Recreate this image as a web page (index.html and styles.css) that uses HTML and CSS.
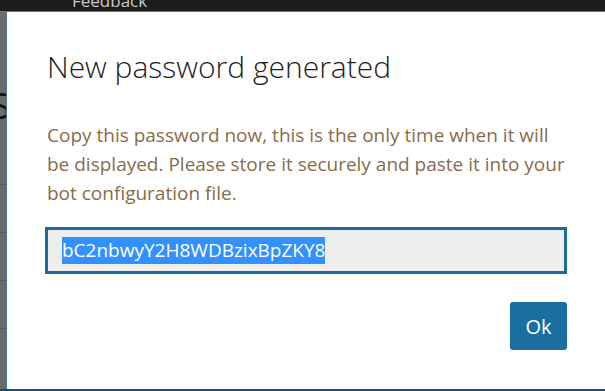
FILE: index.html
```html
<!DOCTYPE html>
<html>
<head>
<meta charset="utf-8">
<link rel="stylesheet" href="styles.css">
</head>
<body>
<div class="topbar"><span class="topbar-link">Feedback</span></div>
<div class="stage">
  <div class="side">
    <span class="side-glyph">S</span>
    <div class="side-line l1"></div>
    <div class="side-line l2"></div>
    <div class="side-line l3"></div>
    <div class="side-line l4"></div>
  </div>
  <div class="dialog">
    <h1 class="title">New password generated</h1>
    <p class="message">Copy this password now, this is the only time when it will be displayed. Please store it securely and paste it into your bot configuration file.</p>
    <div class="field"><span class="selected">bC2nbwyY2H8WDBzixBpZKY8</span></div>
    <div class="actions"><button class="btn">Ok</button></div>
  </div>
</div>
<div class="bottombar"></div>
</body>
</html>
```
FILE: styles.css
```css
html, body {
  margin: 0;
  padding: 0;
  width: 605px;
  height: 391px;
  overflow: hidden;
  background: #6a6a6a;
  font-family: "Open Sans", "Noto Sans", sans-serif;
}
.topbar {
  height: 11px;
  background: #1c1c1c;
  overflow: hidden;
}
.topbar-link {
  display: block;
  margin-left: 72px;
  margin-top: -8px;
  font-size: 17px;
  line-height: 18px;
  color: #c8c8c8;
}
.stage {
  display: flex;
  height: 377px;
  border-top: 1px solid #2f86c0;
}
.side {
  width: 6px;
  background: #6b6b6b;
  position: relative;
  overflow: hidden;
  border-right: 1px solid #3e7aa6;
}
.side-glyph {
  position: absolute;
  left: -9px;
  top: 72px;
  font-size: 36px;
  color: #111;
  line-height: 44px;
}
.side-line {
  position: absolute;
  left: 0;
  width: 6px;
  height: 1px;
  background: #5a5a5a;
}
.l1 { top: 172px; }
.l2 { top: 220px; }
.l3 { top: 268px; }
.l4 { top: 316px; }
.dialog {
  flex: 1;
  background: #ffffff;
  padding: 0 38px 0 40px;
  display: flex;
  flex-direction: column;
}
.title {
  margin: 35px 0 0 0;
  font-weight: 300;
  font-size: 30px;
  line-height: 40px;
  color: #1e1e1e;
}
.message {
  margin: 34px 0 0 0;
  font-size: 19px;
  line-height: 29px;
  color: #8a6b4b;
}
.field {
  margin: 19px 0 0 -2px;
  height: 41px;
  border: 3px solid #1c6b98;
  background: #eeeeee;
  display: flex;
  align-items: center;
  padding-left: 14px;
}
.selected {
  background: #3390ff;
  color: #fff;
  font-size: 19px;
  line-height: 27px;
}
.actions {
  display: flex;
  justify-content: flex-end;
  margin-top: 28px;
}
.btn {
  width: 57px;
  height: 48px;
  border: none;
  border-radius: 3px;
  background: #1a6ea2;
  color: #fff;
  font-family: "Open Sans", "Noto Sans", sans-serif;
  font-size: 20px;
  padding: 0;
}
.bottombar {
  height: 2px;
  background: #1f4f6e;
}
```
